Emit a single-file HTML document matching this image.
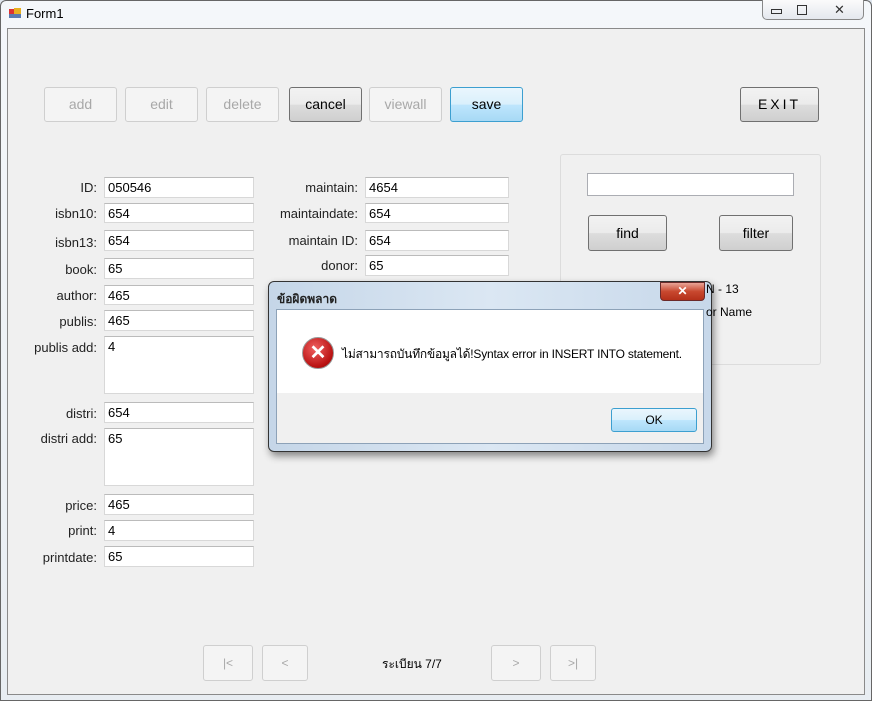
<!DOCTYPE html>
<html><head><meta charset="utf-8"><style>
*{box-sizing:border-box;margin:0;padding:0}
body{width:872px;height:701px;position:relative;overflow:hidden;background:#dfe6ee;font-family:"Liberation Sans","Noto Sans CJK SC",sans-serif;font-size:13px;color:#000}
.a{position:absolute}
.frame{left:0;top:0;width:872px;height:701px;background:linear-gradient(#f4f7fa,#e8edf2);border:1px solid #666;border-radius:6px 6px 0 0}
.client{left:7px;top:28px;width:858px;height:667px;background:#f0f0f0;border:1px solid #8a8a8a}
.btn{border:1px solid #adadad;border-radius:3px;background:linear-gradient(#f2f2f2 0,#ebebeb 50%,#dddddd 51%,#cfcfcf 100%);text-align:center;font-size:14px}
.dis{background:#f4f4f4;border-color:#cfcfcf;color:#a8a8a8}
.tb{background:#fff;border:1px solid #d8d8d8;border-top-color:#bbb;padding:2px 3px;font-size:13px}
.lb{text-align:right;font-size:13px;color:#222}
</style></head><body>
<div class="a frame"></div>
<div class="a" style="left:9px;top:9px;width:6px;height:6px;background:#d33"></div>
<div class="a" style="left:14px;top:8px;width:7px;height:7px;background:#e8b020"></div>
<div class="a" style="left:9px;top:14px;width:12px;height:4px;background:#5a7ab0"></div>
<div class="a" style="left:26px;top:6px;font-size:13px">Form1</div>
<div class="a" style="left:762px;top:0;width:102px;height:20px;border:1px solid #888;border-top:none;border-radius:0 0 5px 5px;background:linear-gradient(#fbfbfb,#e4e8ee)"></div>
<div class="a" style="left:771px;top:9px;width:11px;height:5px;border:1px solid #333"></div>
<div class="a" style="left:797px;top:5px;width:10px;height:10px;border:1px solid #333"></div>
<div class="a" style="left:834px;top:2px;font-size:13px;color:#333">✕</div>
<div class="a client"></div>

<div class="a btn dis" style="left:44px;top:87px;width:73px;height:35px;line-height:33px">add</div>
<div class="a btn dis" style="left:125px;top:87px;width:73px;height:35px;line-height:33px">edit</div>
<div class="a btn dis" style="left:206px;top:87px;width:73px;height:35px;line-height:33px">delete</div>
<div class="a btn" style="left:289px;top:87px;width:73px;height:35px;line-height:33px;border-color:#707070">cancel</div>
<div class="a btn dis" style="left:369px;top:87px;width:73px;height:35px;line-height:33px">viewall</div>
<div class="a btn" style="left:450px;top:87px;width:73px;height:35px;line-height:33px;border-color:#3c9fd0;background:linear-gradient(#eaf6fd,#d9f0fc 50%,#bee6fd 51%,#a7d9f5)">save</div>
<div class="a btn" style="left:740px;top:87px;width:79px;height:35px;line-height:33px;border-color:#707070;letter-spacing:3px">EXIT</div>

<div class="a lb" style="left:10px;top:180px;width:87px">ID:</div><div class="a tb" style="left:104px;top:177px;width:150px;height:21px">050546</div>
<div class="a lb" style="left:10px;top:206px;width:87px">isbn10:</div><div class="a tb" style="left:104px;top:203px;width:150px;height:20px">654</div>
<div class="a lb" style="left:10px;top:235px;width:87px">isbn13:</div><div class="a tb" style="left:104px;top:230px;width:150px;height:21px">654</div>
<div class="a lb" style="left:10px;top:262px;width:87px">book:</div><div class="a tb" style="left:104px;top:258px;width:150px;height:21px">65</div>
<div class="a lb" style="left:10px;top:288px;width:87px">author:</div><div class="a tb" style="left:104px;top:285px;width:150px;height:20px">465</div>
<div class="a lb" style="left:10px;top:314px;width:87px">publis:</div><div class="a tb" style="left:104px;top:310px;width:150px;height:21px">465</div>
<div class="a lb" style="left:10px;top:340px;width:87px">publis add:</div><div class="a tb" style="left:104px;top:336px;width:150px;height:58px">4</div>
<div class="a lb" style="left:10px;top:406px;width:87px">distri:</div><div class="a tb" style="left:104px;top:402px;width:150px;height:21px">654</div>
<div class="a lb" style="left:10px;top:431px;width:87px">distri add:</div><div class="a tb" style="left:104px;top:428px;width:150px;height:58px">65</div>
<div class="a lb" style="left:10px;top:498px;width:87px">price:</div><div class="a tb" style="left:104px;top:494px;width:150px;height:21px">465</div>
<div class="a lb" style="left:10px;top:523px;width:87px">print:</div><div class="a tb" style="left:104px;top:520px;width:150px;height:21px">4</div>
<div class="a lb" style="left:10px;top:550px;width:87px">printdate:</div><div class="a tb" style="left:104px;top:546px;width:150px;height:21px">65</div>

<div class="a lb" style="left:250px;top:180px;width:108px">maintain:</div><div class="a tb" style="left:365px;top:177px;width:144px;height:21px">4654</div>
<div class="a lb" style="left:250px;top:206px;width:108px">maintaindate:</div><div class="a tb" style="left:365px;top:203px;width:144px;height:20px">654</div>
<div class="a lb" style="left:250px;top:233px;width:108px">maintain ID:</div><div class="a tb" style="left:365px;top:230px;width:144px;height:21px">654</div>
<div class="a lb" style="left:250px;top:258px;width:108px">donor:</div><div class="a tb" style="left:365px;top:255px;width:144px;height:21px">65</div>

<div class="a" style="left:560px;top:154px;width:261px;height:211px;border:1px solid #dcdcdc;border-radius:3px"></div>
<div class="a tb" style="left:587px;top:173px;width:207px;height:23px;border-color:#abadb3"></div>
<div class="a btn" style="left:588px;top:215px;width:79px;height:36px;line-height:34px;border-color:#707070">find</div>
<div class="a btn" style="left:719px;top:215px;width:74px;height:36px;line-height:34px;border-color:#707070">filter</div>

<div class="a btn dis" style="left:203px;top:645px;width:50px;height:36px;line-height:34px;font-size:12px">|&lt;</div>
<div class="a btn dis" style="left:262px;top:645px;width:46px;height:36px;line-height:34px;font-size:12px">&lt;</div>
<div class="a" style="left:382px;top:655px;font-size:12px">ระเบียน 7/7</div>
<div class="a btn dis" style="left:491px;top:645px;width:50px;height:36px;line-height:34px;font-size:12px">&gt;</div>
<div class="a btn dis" style="left:550px;top:645px;width:46px;height:36px;line-height:34px;font-size:12px">&gt;|</div>

<div class="a" style="left:268px;top:281px;width:444px;height:171px;border:1px solid #333;border-radius:6px;background:linear-gradient(90deg,#c5d6e8,#dbe7f3 50%,#c7d8ea);box-shadow:2px 4px 8px rgba(0,0,0,.45)"></div>
<div class="a" style="left:706px;top:282px;font-size:12px">N - 13</div>
<div class="a" style="left:706px;top:305px;font-size:12px">or Name</div>
<div class="a" style="left:277px;top:290px;font-size:12px;font-weight:bold;color:#222">ข้อผิดพลาด</div>
<div class="a" style="left:660px;top:282px;width:45px;height:19px;border:1px solid #6b2a2a;border-radius:0 0 4px 4px;background:linear-gradient(#e9a497,#c8482f 50%,#b4301a);color:#fff;font-weight:bold;text-align:center;line-height:17px;font-size:12px">✕</div>
<div class="a" style="left:276px;top:309px;width:428px;height:135px;border:1px solid #8da2b8;background:#f0f0f0"></div>
<div class="a" style="left:277px;top:310px;width:426px;height:83px;background:#fff"></div>
<div class="a" style="left:302px;top:337px;width:32px;height:32px;border-radius:50%;background:radial-gradient(circle at 40% 35%,#f06060,#b81010 70%,#801010);border:1px solid #999;color:#fff;text-align:center;line-height:30px;font-size:20px;font-weight:bold">✕</div>
<div class="a" style="left:342px;top:345px;font-size:12px;letter-spacing:-0.2px">ไม่สามารถบันทึกข้อมูลได้!Syntax error in INSERT INTO statement.</div>
<div class="a btn" style="left:611px;top:408px;width:86px;height:24px;line-height:22px;font-size:12px;border-color:#3c9fd0;background:linear-gradient(#eaf6fd,#d9f0fc 50%,#bee6fd 51%,#a7d9f5)">OK</div>
</body></html>
